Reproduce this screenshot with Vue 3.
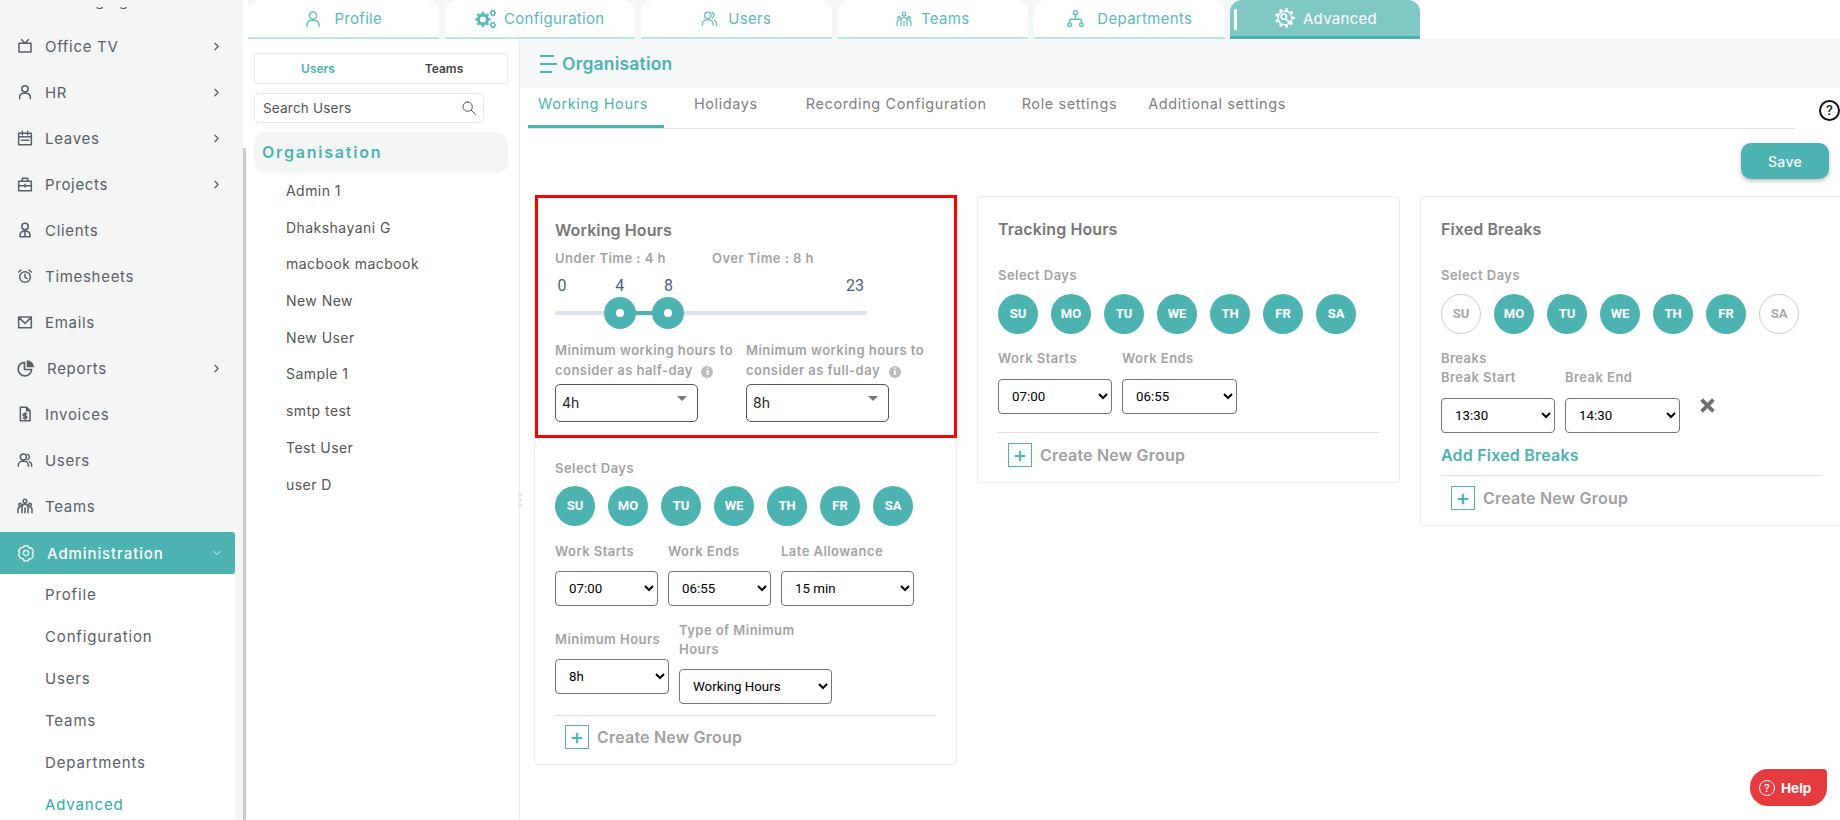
<script setup>
import { h } from 'vue'

function gear(cx, cy, r, teeth, holeRatio = 0.38) {
  const pts = []
  const step = (Math.PI * 2) / teeth
  for (let i = 0; i < teeth; i++) {
    const a = i * step
    const list = [
      [a - step * 0.3, r * 0.76],
      [a - step * 0.16, r],
      [a + step * 0.16, r],
      [a + step * 0.3, r * 0.76],
    ]
    for (const [t, d] of list) {
      pts.push((cx + Math.cos(t) * d).toFixed(2) + ' ' + (cy + Math.sin(t) * d).toFixed(2))
    }
  }
  const hole = r * holeRatio
  return (
    'M' + pts.join('L') + 'Z' +
    `M${cx - hole} ${cy}a${hole} ${hole} 0 1 0 ${hole * 2} 0a${hole} ${hole} 0 1 0 ${-hole * 2} 0Z`
  )
}

const strokes = {
  tv: 'M3 8h18v13H3z M7 2.500l5 5.500 5-5.500',
  person: 'M12 2.500a4.800 4.800 0 1 0 0 9.600 4.800 4.800 0 0 0 0-9.600z M4 22v-2.500a5.500 5.500 0 0 1 5.500-5.500h5a5.500 5.500 0 0 1 5.500 5.500V22',
  calendar: 'M2.500 5h19v17h-19z M2.500 10h19 M8 2v5 M16 2v5 M6.500 15.500h2.500 M10.800 15.500h2.500 M15 15.500h2.500',
  briefcase: 'M2.500 8h19v14h-19z M8 8V3.500h8V8 M2.500 14.500h19 M12 12.500v4',
  client: 'M12 2a4.800 4.800 0 1 0 0 9.600A4.800 4.800 0 0 0 12 2z M4.500 22v-2.500a6 6 0 0 1 6-5.500h3a6 6 0 0 1 6 5.500V22z M12 14.500v7',
  clock: 'M12 5.500a8 8 0 1 0 0 16 8 8 0 0 0 0-16z M12 9.500v4.500l3 1.500 M2.500 6l3.500-3 M21.500 6L18 3',
  mail: 'M2.500 4.500h19v16h-19z M3 5.500l9 8.500 9-8.500',
  pie: 'M10 4.500a9 9 0 1 0 9.500 9.500H10z',
  invoice: 'M5 2h9.500L19.500 7v15H5z M14.500 2v5h5 M14.500 11.500H11a1.700 1.700 0 0 0 0 3.500h2a1.700 1.700 0 0 1 0 3.500H9.500 M12.200 10v10',
  users: 'M9.500 3a4.500 4.500 0 1 0 0 9 4.500 4.500 0 0 0 0-9z M2 21.500v-1.500a6 6 0 0 1 6-6h3a6 6 0 0 1 6 6v1.500 M15.500 3.300a4.500 4.500 0 0 1 0 8.500 M18.500 14.500a6 6 0 0 1 3.500 5.500v1.500',
  teams: 'M12 2a2.700 2.700 0 1 0 0 5.400A2.700 2.700 0 0 0 12 2z M4.500 8a2 2 0 1 0 0 4 2 2 0 0 0 0-4z M19.500 8a2 2 0 1 0 0 4 2 2 0 0 0 0-4z M7.500 22v-8a4.500 4.500 0 0 1 9 0v8 M12 15v7 M1.500 22v-5a3 3 0 0 1 3-3 M22.500 22v-5a3 3 0 0 0-3-3',
  hexgear: 'M9.500 2.500h5l1.500 2.500 3.500.5 2.500 4.500-1.500 2.500 1.500 2.500-2.500 4.500-3.500.5-1.500 2.500h-5L8 19.500l-3.500-.5L2 14.500 3.500 12 2 9.500 4.500 5 8 4.500z M12 8.500a3.500 3.500 0 1 0 0 7 3.500 3.500 0 0 0 0-7z',
  tree: 'M12 2a2.600 2.600 0 1 0 0 5.200A2.600 2.600 0 0 0 12 2z M12 7.500V13 M4.500 17.500V15a2 2 0 0 1 2-2h11a2 2 0 0 1 2 2v2.500 M4.500 17.500a2.300 2.300 0 1 0 0 4.600 2.300 2.300 0 0 0 0-4.600z M19.500 17.500a2.300 2.300 0 1 0 0 4.600 2.300 2.300 0 0 0 0-4.600z',
  search: 'M10 3a7 7 0 1 0 0 14 7 7 0 0 0 0-14z M15.500 15.500L21.500 21.500',
  chevron: 'M9 6l6 6-6 6',
  down: 'M6 9l6 6 6-6',
  advgear: 'M10.500 7a3.200 3.200 0 1 0 .01 0z M13 13l6.500 6.500',
}

const fills = {
  pie: 'M13 1.500a9.500 9.500 0 0 1 9.500 9.500H13z',
  gears: gear(9, 13, 9, 8) + gear(20.500, 5.500, 4, 6) + gear(20.500, 19.500, 4, 6),
  advgear: gear(12, 12, 12, 9, 0.62),
}

// small icon helper, one or both of stroke and fill
const Ico = (props) =>
  h('svg', { viewBox: '0 0 24 24', class: 'ico', width: props.size, height: props.size }, [
    strokes[props.name]
      ? h('path', { d: strokes[props.name], fill: 'none', stroke: 'currentColor', 'stroke-width': props.sw || 2.3, 'stroke-linejoin': 'round', 'stroke-linecap': 'round' })
      : null,
    fills[props.name] ? h('path', { d: fills[props.name], fill: 'currentColor', 'fill-rule': 'evenodd' }) : null,
  ])
Ico.props = ['name', 'size', 'sw']

const navItems = [
  { label: 'Messaging', icon: 'mail' },
  { label: 'Office TV', icon: 'tv', arrow: true },
  { label: 'HR', icon: 'person', arrow: true },
  { label: 'Leaves', icon: 'calendar', arrow: true },
  { label: 'Projects', icon: 'briefcase', arrow: true },
  { label: 'Clients', icon: 'client' },
  { label: 'Timesheets', icon: 'clock' },
  { label: 'Emails', icon: 'mail' },
  { label: 'Reports', icon: 'pie', arrow: true, size: 18 },
  { label: 'Invoices', icon: 'invoice' },
  { label: 'Users', icon: 'users' },
  { label: 'Teams', icon: 'teams' },
]
const subItems = ['Profile', 'Configuration', 'Users', 'Teams', 'Departments', 'Advanced']

const topTabs = [
  { label: 'Profile', icon: 'person', size: 18, gap: 12 },
  { label: 'Configuration', icon: 'gears', size: 21, gap: 8 },
  { label: 'Users', icon: 'users', size: 17, gap: 10 },
  { label: 'Teams', icon: 'teams', size: 16, gap: 9 },
  { label: 'Departments', icon: 'tree', size: 19, gap: 12 },
]

const people = ['Admin 1', 'Dhakshayani G', 'macbook macbook', 'New New', 'New User', 'Sample 1', 'smtp test', 'Test User', 'user D']
const subTabs = ['Working Hours', 'Holidays', 'Recording Configuration', 'Role settings', 'Additional settings']

const days = ['SU', 'MO', 'TU', 'WE', 'TH', 'FR', 'SA']
const weekdaysOnly = ['MO', 'TU', 'WE', 'TH', 'FR']

const floor = 0
const ceil = 23
const low = 4
const high = 8
const pct = (v) => 16 + ((v - floor) / (ceil - floor)) * 280
</script>

<template>
  <div class="page">
    <aside class="side">
      <nav class="nav">
        <div class="nav-list">
          <div v-for="n in navItems" :key="n.label" class="nav-item">
            <Ico class="nav-ico" :name="n.icon" :size="n.size || 16" />
            <span class="nav-label">{{ n.label }}</span>
            <Ico v-if="n.arrow" class="nav-arrow" name="chevron" :size="13" :sw="2.4" />
          </div>
        </div>
        <div class="nav-cover"></div>
        <div class="nav-active">
          <Ico name="hexgear" :size="18" :sw="1.800" />
          <span>Administration</span>
          <Ico class="nav-down" name="down" :size="12" :sw="1.600" />
        </div>
        <div class="nav-sub">
          <div v-for="s in subItems" :key="s" class="sub-item" :class="{ on: s === 'Advanced' }">{{ s }}</div>
        </div>
      </nav>
      <div class="thumb"></div>
    </aside>

    <main class="main">
      <div class="toptabs">
        <div v-for="t in topTabs" :key="t.label" class="toptab" :style="{ gap: t.gap + 'px' }">
          <Ico :name="t.icon" :size="t.size" :sw="1.700" />
          <span>{{ t.label }}</span>
        </div>
        <div class="toptab active">
          <i class="tab-bar"></i>
          <span class="adv-ico">
            <Ico name="advgear" :size="20" :sw="2.200" />
          </span>
          <span>Advanced</span>
        </div>
      </div>

      <div class="body">
        <section class="left">
          <div class="switch">
            <span class="on">Users</span>
            <span>Teams</span>
          </div>
          <div class="search">
            <input placeholder="Search Users" />
            <Ico name="search" :size="16" :sw="1.500" />
          </div>
          <div class="org-title">Organisation</div>
          <ul class="people">
            <li v-for="p in people" :key="p">{{ p }}</li>
          </ul>
          <div class="grip"><i></i><i></i><i></i></div>
        </section>

        <section class="right">
          <div class="org-head">
            <span class="burger"><i></i><i></i><i></i></span>
            <span>Organisation</span>
          </div>
          <div class="subtabs-row">
            <div class="subtabs">
              <span v-for="(t, i) in subTabs" :key="t" class="subtab" :class="{ on: i === 0 }">{{ t }}</span>
            </div>
            <div class="help-mark">?</div>
          </div>
          <div class="save-row">
            <button class="save">Save</button>
          </div>

          <div class="cards">
            <div class="card">
              <div class="hl">
                <h3>Working Hours</h3>
                <div class="time-row">
                  <span class="lbl w-under">Under Time : 4 h</span>
                  <span class="lbl">Over Time : 8 h</span>
                </div>
                <div class="slider">
                  <span class="tick" style="left: 7px">0</span>
                  <span class="tick" :style="{ left: pct(low) + 'px' }">4</span>
                  <span class="tick" :style="{ left: pct(high) + 'px' }">8</span>
                  <span class="tick" style="left: 300px">23</span>
                  <div class="track"></div>
                  <div class="range" :style="{ left: pct(low) + 'px', width: pct(high) - pct(low) + 'px' }"></div>
                  <div class="handle" :style="{ left: pct(low) + 'px' }"></div>
                  <div class="handle" :style="{ left: pct(high) + 'px' }"></div>
                </div>
                <div class="mins">
                  <div>
                    <div class="lbl multi">Minimum working hours to<br />consider as half-day <b class="info">i</b></div>
                    <div class="fake-select">4h<i></i></div>
                  </div>
                  <div>
                    <div class="lbl multi">Minimum working hours to<br />consider as full-day <b class="info">i</b></div>
                    <div class="fake-select">8h<i></i></div>
                  </div>
                </div>
              </div>
              <div class="inner first">
                <div class="lbl">Select Days</div>
                <div class="days">
                  <span v-for="d in days" :key="d" class="day">{{ d }}</span>
                </div>
                <div class="fields">
                  <div class="field">
                    <div class="lbl">Work Starts</div>
                    <select class="w103"><option>07:00</option></select>
                  </div>
                  <div class="field">
                    <div class="lbl">Work Ends</div>
                    <select class="w103"><option>06:55</option></select>
                  </div>
                  <div class="field">
                    <div class="lbl">Late Allowance</div>
                    <select class="w133"><option>15 min</option></select>
                  </div>
                </div>
                <div class="fields second">
                  <div class="field min-col">
                    <div class="lbl">Minimum Hours</div>
                    <select class="w114"><option>8h</option></select>
                  </div>
                  <div class="field">
                    <div class="lbl type">Type of Minimum<br />Hours</div>
                    <select class="w153"><option>Working Hours</option></select>
                  </div>
                </div>
                <div class="create"><span class="plus">+</span>Create New Group</div>
              </div>
            </div>

            <div class="card">
              <div class="inner">
                <h3>Tracking Hours</h3>
                <div class="lbl sel-days">Select Days</div>
                <div class="days">
                  <span v-for="d in days" :key="d" class="day">{{ d }}</span>
                </div>
                <div class="fields">
                  <div class="field">
                    <div class="lbl">Work Starts</div>
                    <select class="w114"><option>07:00</option></select>
                  </div>
                  <div class="field">
                    <div class="lbl">Work Ends</div>
                    <select class="w115"><option>06:55</option></select>
                  </div>
                </div>
                <div class="create tight"><span class="plus">+</span>Create New Group</div>
              </div>
            </div>

            <div class="card">
              <div class="inner">
                <h3>Fixed Breaks</h3>
                <div class="lbl sel-days">Select Days</div>
                <div class="days">
                  <span v-for="d in days" :key="d" class="day" :class="{ off: !weekdaysOnly.includes(d) }">{{ d }}</span>
                </div>
                <div class="lbl breaks">Breaks</div>
                <div class="fields break-row">
                  <div class="field">
                    <div class="lbl">Break Start</div>
                    <select class="w114"><option>13:30</option></select>
                  </div>
                  <div class="field">
                    <div class="lbl">Break End</div>
                    <select class="w115"><option>14:30</option></select>
                  </div>
                  <svg class="remove" viewBox="0 0 14 14" width="15" height="15">
                    <path d="M1.500 1.500l11 11M12.500 1.500l-11 11" stroke="currentColor" stroke-width="3.400" fill="none" />
                  </svg>
                </div>
                <div class="add-break">Add Fixed Breaks</div>
                <div class="create tight2"><span class="plus">+</span>Create New Group</div>
              </div>
            </div>
          </div>
        </section>
      </div>
    </main>

    <div class="help-btn">
      <span class="help-ring">?</span>
      Help
    </div>
  </div>
</template>

<style>
html,
body {
  margin: 0;
  background: #fff;
}
</style>

<style scoped>
.page {
  display: flex;
  width: 1840px;
  height: 820px;
  overflow: hidden;
  position: relative;
  font-family: Inter, "Liberation Sans", sans-serif;
  color: #555;
}

/* sidebar */
.side {
  display: flex;
  flex: none;
  width: 248px;
  height: 820px;
  overflow: hidden;
}
.nav {
  position: relative;
  width: 243px;
  background: #f4f6f6;
  flex: none;
}
.nav-list {
  margin-top: -23px;
  margin-bottom: 3px;
}
.nav-cover {
  position: absolute;
  left: 0;
  top: 0;
  width: 243px;
  height: 7px;
  background: #f4f6f6;
}
.nav-item {
  display: flex;
  align-items: center;
  height: 46px;
  color: #5a6068;
  font-size: 15px;
  letter-spacing: 0.7px;
  position: relative;
}
.nav-ico {
  margin-left: 17px;
  flex: none;
}
.nav-label {
  margin-left: 12px;
}
.nav-arrow {
  position: absolute;
  left: 210px;
}
.nav-active {
  display: flex;
  align-items: center;
  width: 235px;
  height: 42px;
  background: #4db3b1;
  color: #fff;
  font-size: 15px;
  font-weight: 500;
  letter-spacing: 0.9px;
  border-radius: 0 3px 3px 0;
  box-sizing: border-box;
  padding-left: 17px;
  position: relative;
}
.nav-active span {
  margin-left: 12px;
}
.nav-down {
  position: absolute;
  left: 211px;
}
.nav-sub {
  width: 235px;
  background: #fff;
  height: 260px;
}
.sub-item {
  height: 42px;
  line-height: 42px;
  padding-left: 45px;
  font-size: 15px;
  letter-spacing: 0.85px;
  color: #5a6068;
}
.sub-item.on {
  color: #33aaa8;
}
.thumb {
  width: 3px;
  margin-top: 148px;
  background: #c9cad8;
  flex: none;
}

/* main */
.main {
  flex: 1;
  min-width: 0;
}
.toptabs {
  display: flex;
  gap: 6px;
  width: 1172px;
  height: 39px;
  background: #f4f7f7;
}
.toptab {
  position: relative;
  display: flex;
  align-items: center;
  justify-content: center;
  width: 190.500px;
  height: 39px;
  box-sizing: border-box;
  background: #fff;
  border-radius: 12px 12px 0 0;
  border-bottom: 2px solid #bfe3e3;
  color: #5cbab8;
  font-size: 15px;
  letter-spacing: 0.3px;
}
.toptab.active {
  width: 190px;
  margin-left: -0.500px;
  background: #7fc8c4;
  border-bottom: 3px solid #4db3b1;
  color: #fff;
  gap: 8px;
}
.tab-bar {
  position: absolute;
  left: 4px;
  top: 9px;
  width: 3px;
  height: 21px;
  background: #fff;
  border-radius: 2px;
}
.adv-ico {
  display: flex;
  margin-left: 2px;
}
.body {
  display: flex;
  height: 781px;
}

/* users panel */
.left {
  position: relative;
  width: 265px;
  flex: none;
  border-right: 1px solid #ececec;
  padding: 14px 0 0 6px;
  box-sizing: content-box;
}
.switch {
  display: flex;
  width: 254px;
  height: 31px;
  box-sizing: border-box;
  border: 1px solid #eaeaea;
  border-radius: 2px;
  align-items: center;
  font-size: 12px;
  font-weight: 600;
  color: #444;
}
.switch span {
  flex: 1;
  text-align: center;
}
.switch .on {
  color: #4db3b1;
}
.search {
  display: flex;
  align-items: center;
  width: 230px;
  height: 30px;
  box-sizing: border-box;
  margin-top: 9px;
  padding: 0 6px 0 8px;
  border: 1px solid #e6e6e6;
  border-radius: 6px;
  color: #555;
}
.search input {
  flex: 1;
  width: 100%;
  min-width: 0;
  border: none;
  outline: none;
  padding: 0;
  font-family: inherit;
  font-size: 13.500px;
  letter-spacing: 0.2px;
}
.search input::placeholder {
  color: #555;
  opacity: 1;
}
.org-title {
  width: 246px;
  height: 41px;
  line-height: 41px;
  margin-top: 9px;
  padding-left: 8px;
  background: #f4f6f6;
  border-radius: 12px;
  color: #4db3b1;
  font-size: 16px;
  font-weight: 600;
  letter-spacing: 1.800px;
}
.people {
  list-style: none;
  margin: 0;
  padding: 0 0 0 32px;
}
.people li {
  height: 36.700px;
  line-height: 36.700px;
  font-size: 14px;
  letter-spacing: 0.45px;
  color: #555;
}
.grip {
  position: absolute;
  right: -2.500px;
  top: 454px;
  display: flex;
  flex-direction: column;
  gap: 1px;
}
.grip i {
  width: 4px;
  height: 4px;
  border-radius: 50%;
  background: #e4e8ec;
}

/* right column */
.right {
  flex: 1;
  min-width: 0;
}
.org-head {
  display: flex;
  align-items: center;
  gap: 5px;
  height: 49px;
  padding-left: 20px;
  background: #f5f7f9;
  color: #4db3b1;
  font-size: 17.500px;
  font-weight: 600;
  letter-spacing: 0.2px;
}
.burger {
  display: flex;
  flex-direction: column;
  gap: 6px;
  width: 17px;
}
.burger i {
  display: block;
  height: 2px;
  background: #4db3b1;
}
.burger i:nth-child(1) {
  width: 14px;
}
.burger i:nth-child(3) {
  width: 12px;
}
.subtabs-row {
  display: flex;
  height: 41px;
  padding-left: 8px;
  position: relative;
}
.subtabs {
  display: flex;
  width: 1267px;
  box-sizing: border-box;
  border-bottom: 1px solid #e2e2e2;
  font-size: 14.500px;
  letter-spacing: 0.6px;
  color: #808080;
}
.subtab {
  height: 40px;
  line-height: 32px;
  padding: 0 18px 0 10px;
  margin-right: 20px;
  box-sizing: border-box;
}
.subtab.on {
  padding-right: 16px;
  color: #4db3b1;
  border-bottom: 3px solid #4db3b1;
}
.subtab:nth-child(3) {
  margin-right: 7px;
}
.subtab:nth-child(4) {
  margin-right: 3px;
}
.help-mark {
  position: absolute;
  left: 1299px;
  top: 12px;
  width: 17px;
  height: 17px;
  border: 2px solid #111;
  border-radius: 50%;
  font-size: 13px;
  font-weight: 500;
  line-height: 17px;
  text-align: center;
  color: #111;
}
.save-row {
  display: flex;
  justify-content: flex-end;
  padding: 14px 11px 0 0;
}
.save {
  width: 88px;
  height: 36px;
  border: none;
  border-radius: 10px;
  background: #4db3b1;
  color: #fff;
  font-family: inherit;
  font-size: 14px;
  font-weight: 500;
  letter-spacing: 0.3px;
  box-shadow: 0 2px 4px rgba(0, 0, 0, 0.25);
}
.cards {
  display: flex;
  align-items: flex-start;
  gap: 20px;
  margin-top: 17px;
  padding-left: 14px;
}
.card {
  flex: none;
  width: 423px;
  box-sizing: border-box;
  border: 1px solid #ececec;
  border-radius: 4px;
  background: #fff;
}
.hl {
  margin: -2px -1px -1px -0.500px;
  padding: 20px 0 13px 17.500px;
  border: 3px solid #f00;
}
.inner {
  padding: 20px 20px 0;
}
.inner.first {
  padding-top: 21.500px;
}
h3 {
  margin: 0;
  font-size: 16px;
  line-height: 24px;
  font-weight: 600;
  letter-spacing: 0.1px;
  color: #777;
}
.hl h3 {
  margin-bottom: -1px;
}
.lbl {
  font-size: 13px;
  line-height: 19px;
  font-weight: 600;
  color: #a3a3a3;
  letter-spacing: 0.45px;
}
.sel-days {
  margin-top: 25px;
}
.time-row {
  display: flex;
  margin-top: 8px;
}
.w-under {
  width: 157px;
}
.slider {
  position: relative;
  width: 312px;
  height: 58px;
  margin-top: 4px;
}
.tick {
  position: absolute;
  top: 4px;
  transform: translateX(-50%);
  font-family: Roboto, sans-serif;
  font-size: 16px;
  line-height: 20px;
  color: #4f5d80;
}
.track {
  position: absolute;
  left: 0;
  right: 0;
  top: 39px;
  height: 4px;
  background: #d8e0f2;
  border-radius: 2px;
}
.range {
  position: absolute;
  top: 39px;
  height: 4px;
  background: #4db3b1;
}
.handle {
  position: absolute;
  top: 25px;
  width: 32px;
  height: 32px;
  margin-left: -16px;
  border-radius: 50%;
  background: #4db3b1;
}
.handle::after {
  content: "";
  position: absolute;
  left: 12px;
  top: 12px;
  width: 8px;
  height: 8px;
  border-radius: 50%;
  background: #fff;
}
.mins {
  display: grid;
  grid-template-columns: 191px 191px;
  margin-top: 10px;
}
.multi {
  line-height: 20px;
  white-space: nowrap;
}
.info {
  display: inline-block;
  width: 12px;
  height: 12px;
  margin-left: 5px;
  border-radius: 50%;
  background: #bcbcbc;
  color: #fff;
  font-size: 9px;
  line-height: 12px;
  text-align: center;
  letter-spacing: 0;
}
.fake-select {
  position: relative;
  width: 143px;
  height: 38px;
  line-height: 36px;
  box-sizing: border-box;
  margin-top: 4px;
  padding-left: 6px;
  border: 1px solid #555;
  border-radius: 5px;
  font-size: 14px;
  color: #222;
}
.fake-select i {
  position: absolute;
  right: 10px;
  top: 11px;
  border-left: 5px solid transparent;
  border-right: 5px solid transparent;
  border-top: 5px solid #777;
}
.days {
  display: flex;
  gap: 13px;
  margin-top: 8.500px;
}
.day {
  width: 40px;
  height: 40px;
  box-sizing: border-box;
  border-radius: 50%;
  background: #4db3b1;
  color: #fff;
  font-family: Roboto, sans-serif;
  font-size: 13px;
  font-weight: 700;
  line-height: 40px;
  text-align: center;
}
.day.off {
  background: #fff;
  border: 1px solid #ccc;
  color: #a8a8a8;
  line-height: 38px;
}
.fields {
  display: flex;
  gap: 10px;
  margin-top: 15.500px;
}
.fields.second {
  margin-top: 14.500px;
}
.min-col {
  margin-top: 9px;
}
.field select {
  display: block;
  height: 35px;
  margin-top: 10.500px;
  padding-left: 9px;
  background: #fff;
  border: 1px solid #767676;
  border-radius: 4px;
  color: #000;
  font-family: Roboto, sans-serif;
  font-size: 13.300px;
}
.w103 {
  width: 103px;
}
.w114 {
  width: 114px;
}
.w115 {
  width: 115px;
}
.w133 {
  width: 133px;
}
.w153 {
  width: 153px;
}
.breaks {
  margin-top: 15.500px;
}
.break-row {
  margin-top: 0;
}
.remove {
  margin: 30px 0 0 10px;
  color: #6e6e6e;
}
.add-break {
  margin-top: 10px;
  font-size: 16px;
  line-height: 24px;
  font-weight: 600;
  letter-spacing: 0.2px;
  color: #4db3b1;
}
.create {
  display: flex;
  align-items: center;
  gap: 8px;
  margin-top: 11px;
  padding: 9px 0 15px 10px;
  border-top: 1px solid #dedede;
  font-size: 16px;
  font-weight: 600;
  letter-spacing: 0.2px;
  color: #a0a0a0;
}
.create.tight {
  margin-top: 18px;
  padding-top: 10px;
}
.create.tight2 {
  margin-top: 8px;
  padding-top: 10px;
}
.plus {
  width: 24px;
  height: 24px;
  box-sizing: border-box;
  border: 1px solid #4db3b1;
  color: #4db3b1;
  font-size: 22px;
  font-weight: 500;
  line-height: 20px;
  text-align: center;
}

/* floating help */
.help-btn {
  position: absolute;
  left: 1750px;
  top: 769px;
  display: flex;
  align-items: center;
  gap: 6px;
  width: 77px;
  height: 37px;
  box-sizing: border-box;
  padding-left: 9px;
  background: #e53a3e;
  border-radius: 18px 4px 18px 18px;
  color: #fff;
  font-size: 13.500px;
  font-weight: 700;
}
.help-ring {
  width: 14px;
  height: 14px;
  border: 1px solid #fff;
  border-radius: 50%;
  font-size: 11px;
  font-weight: 500;
  line-height: 14px;
  text-align: center;
}
</style>
